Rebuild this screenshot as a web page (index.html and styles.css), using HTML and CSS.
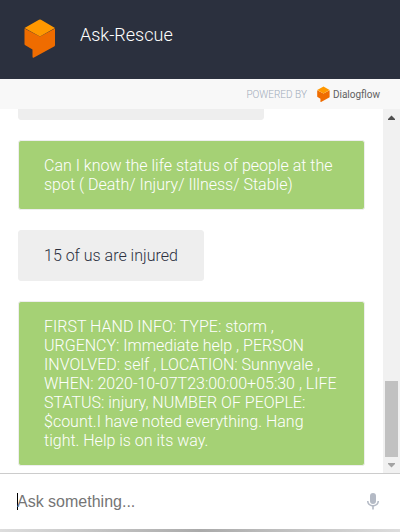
FILE: index.html
```html
<!DOCTYPE html>
<html lang="en">
<head>
<meta charset="utf-8">
<title>Ask-Rescue</title>
<link rel="stylesheet" href="styles.css">
</head>
<body>
<svg class="defs" aria-hidden="true">
  <symbol id="cube" viewBox="0 0 32 40">
    <path fill="#ef6c00" d="M.5 9.500 16 17.500l15-8v16.500q0 1-.9 1.500L10 38.500q-1.500.8-1.500-1V30.500l-7.200-4.200Q.5 25.800.5 25z"/>
    <path fill="#ff9800" d="M15 .8q1-.6 2 0L31 9 16 17.500.5 9z"/>
  </symbol>
</svg>
<header class="header">
  <svg class="header-logo" aria-hidden="true"><use href="#cube"/></svg>
  <h1 class="title">Ask-Rescue</h1>
</header>
<div class="powered">
  <span>POWERED BY</span>
  <a class="brand" href="#">
    <svg class="brand-logo" aria-hidden="true"><use href="#cube"/></svg>
    <span>Dialogflow</span>
  </a>
</div>
<main class="chat">
  <div class="messages">
    <p class="bubble user earlier"></p>
    <p class="bubble bot">Can I know the life status of people at the spot ( Death/ Injury/ Illness/ Stable)</p>
    <p class="bubble user">15 of us are injured</p>
    <p class="bubble bot">FIRST HAND INFO: TYPE: storm , URGENCY: Immediate help , PERSON INVOLVED: self , LOCATION: Sunnyvale , WHEN: 2020-10-07T23:00:00+05:30 , LIFE STATUS: injury, NUMBER OF PEOPLE: $count.I have noted everything. Hang tight. Help is on its way.</p>
  </div>
  <div class="scrollbar" aria-hidden="true">
    <svg class="arrow up" viewBox="0 0 17 17"><path d="M5 11h7v-1L8.500 6.500 5 10z"/></svg>
    <div class="thumb"></div>
    <svg class="arrow down" viewBox="0 0 17 16"><path d="M5 6h7v1l-3.500 3.500L5 7z"/></svg>
  </div>
</main>
<form class="composer">
  <input class="query" type="text" placeholder="Ask something..." aria-label="Ask something">
  <button class="mic" type="button" aria-label="Speak">
    <svg viewBox="0 0 12 17"><rect x="3" y="0" width="6" height="11" rx="3"/><path d="M0 8h1.500c0 2.500 2 4 4.500 4s4.500-1.500 4.500-4H12c0 3-2.200 5-5.200 5.400V16.500H5.200v-3.100C2.200 13 0 11 0 8z"/></svg>
  </button>
</form>
<div class="shade"></div>
</body>
</html>
```
FILE: styles.css
```css
* {
  box-sizing: border-box;
}

body {
  margin: 0;
  height: 100vh;
  display: flex;
  flex-direction: column;
  background: #fff;
  font-family: Roboto, sans-serif;
  font-weight: 300;
}

.defs {
  position: absolute;
  width: 0;
  height: 0;
}

.header {
  flex: none;
  display: flex;
  align-items: flex-start;
  gap: 24px;
  height: 79px;
  padding: 19px 24px;
  background: #2b303e;
  color: #fff;
}

.header-logo {
  width: 32px;
  height: 40px;
}

.title {
  margin: 0;
  padding-top: 4px;
  font-size: 18px;
  line-height: 24px;
  font-weight: 300;
}

.powered {
  flex: none;
  display: flex;
  align-items: center;
  justify-content: flex-end;
  gap: 10px;
  height: 30px;
  padding-right: 20px;
  background: #f8f8f8;
  color: #9fabb8;
  font-size: 10px;
}

.brand {
  display: flex;
  align-items: center;
  gap: 3px;
  color: #616161;
  font-weight: 400;
  text-decoration: none;
}

.brand-logo {
  width: 13px;
  height: 17px;
}

.chat {
  flex: 1;
  min-height: 0;
  display: flex;
}

.messages {
  flex: 1;
  display: flex;
  flex-direction: column;
  justify-content: flex-end;
  align-items: flex-start;
  gap: 20px;
  padding: 0 18px 7px;
  overflow: hidden;
}

.bubble {
  flex: none;
  margin: 0;
  padding: 15px 25px;
  border: 1px solid #eee;
  border-radius: 3px;
  font-size: 16px;
  line-height: 19px;
}

.bot {
  background: #a5d175;
  color: #fff;
}

.user {
  background: #eee;
  color: #2b303e;
}

.earlier {
  width: 71%;
  height: 51px;
}

.scrollbar {
  flex: none;
  display: flex;
  flex-direction: column;
  width: 17px;
  background: #f1f1f1;
}

.arrow {
  width: 17px;
  height: 17px;
}

.up {
  fill: #505050;
}

.down {
  height: 16px;
  fill: #a3a3a3;
}

.thumb {
  height: 76px;
  margin: auto 2px 0;
  background: #c1c1c1;
}

.composer {
  flex: none;
  display: flex;
  align-items: center;
  height: 56px;
  padding: 0 21px 0 17px;
  border-top: 1px solid #ccc;
}

.query {
  flex: 1;
  min-width: 0;
  height: 24px;
  padding: 0;
  border: 0;
  outline: 0;
  background: linear-gradient(#000, #000) left center / 1px 17px no-repeat;
  font: 16px/24px "Liberation Sans", Arial, sans-serif;
}

.query::placeholder {
  color: #757575;
}

.mic {
  display: flex;
  padding: 0;
  border: 0;
  background: none;
}

.mic svg {
  width: 12px;
  height: 17px;
  fill: #b4bac5;
}

.shade {
  flex: none;
  height: 3px;
  background: linear-gradient(90deg, #ddd, #aaa 50%, #ddd);
}
```
